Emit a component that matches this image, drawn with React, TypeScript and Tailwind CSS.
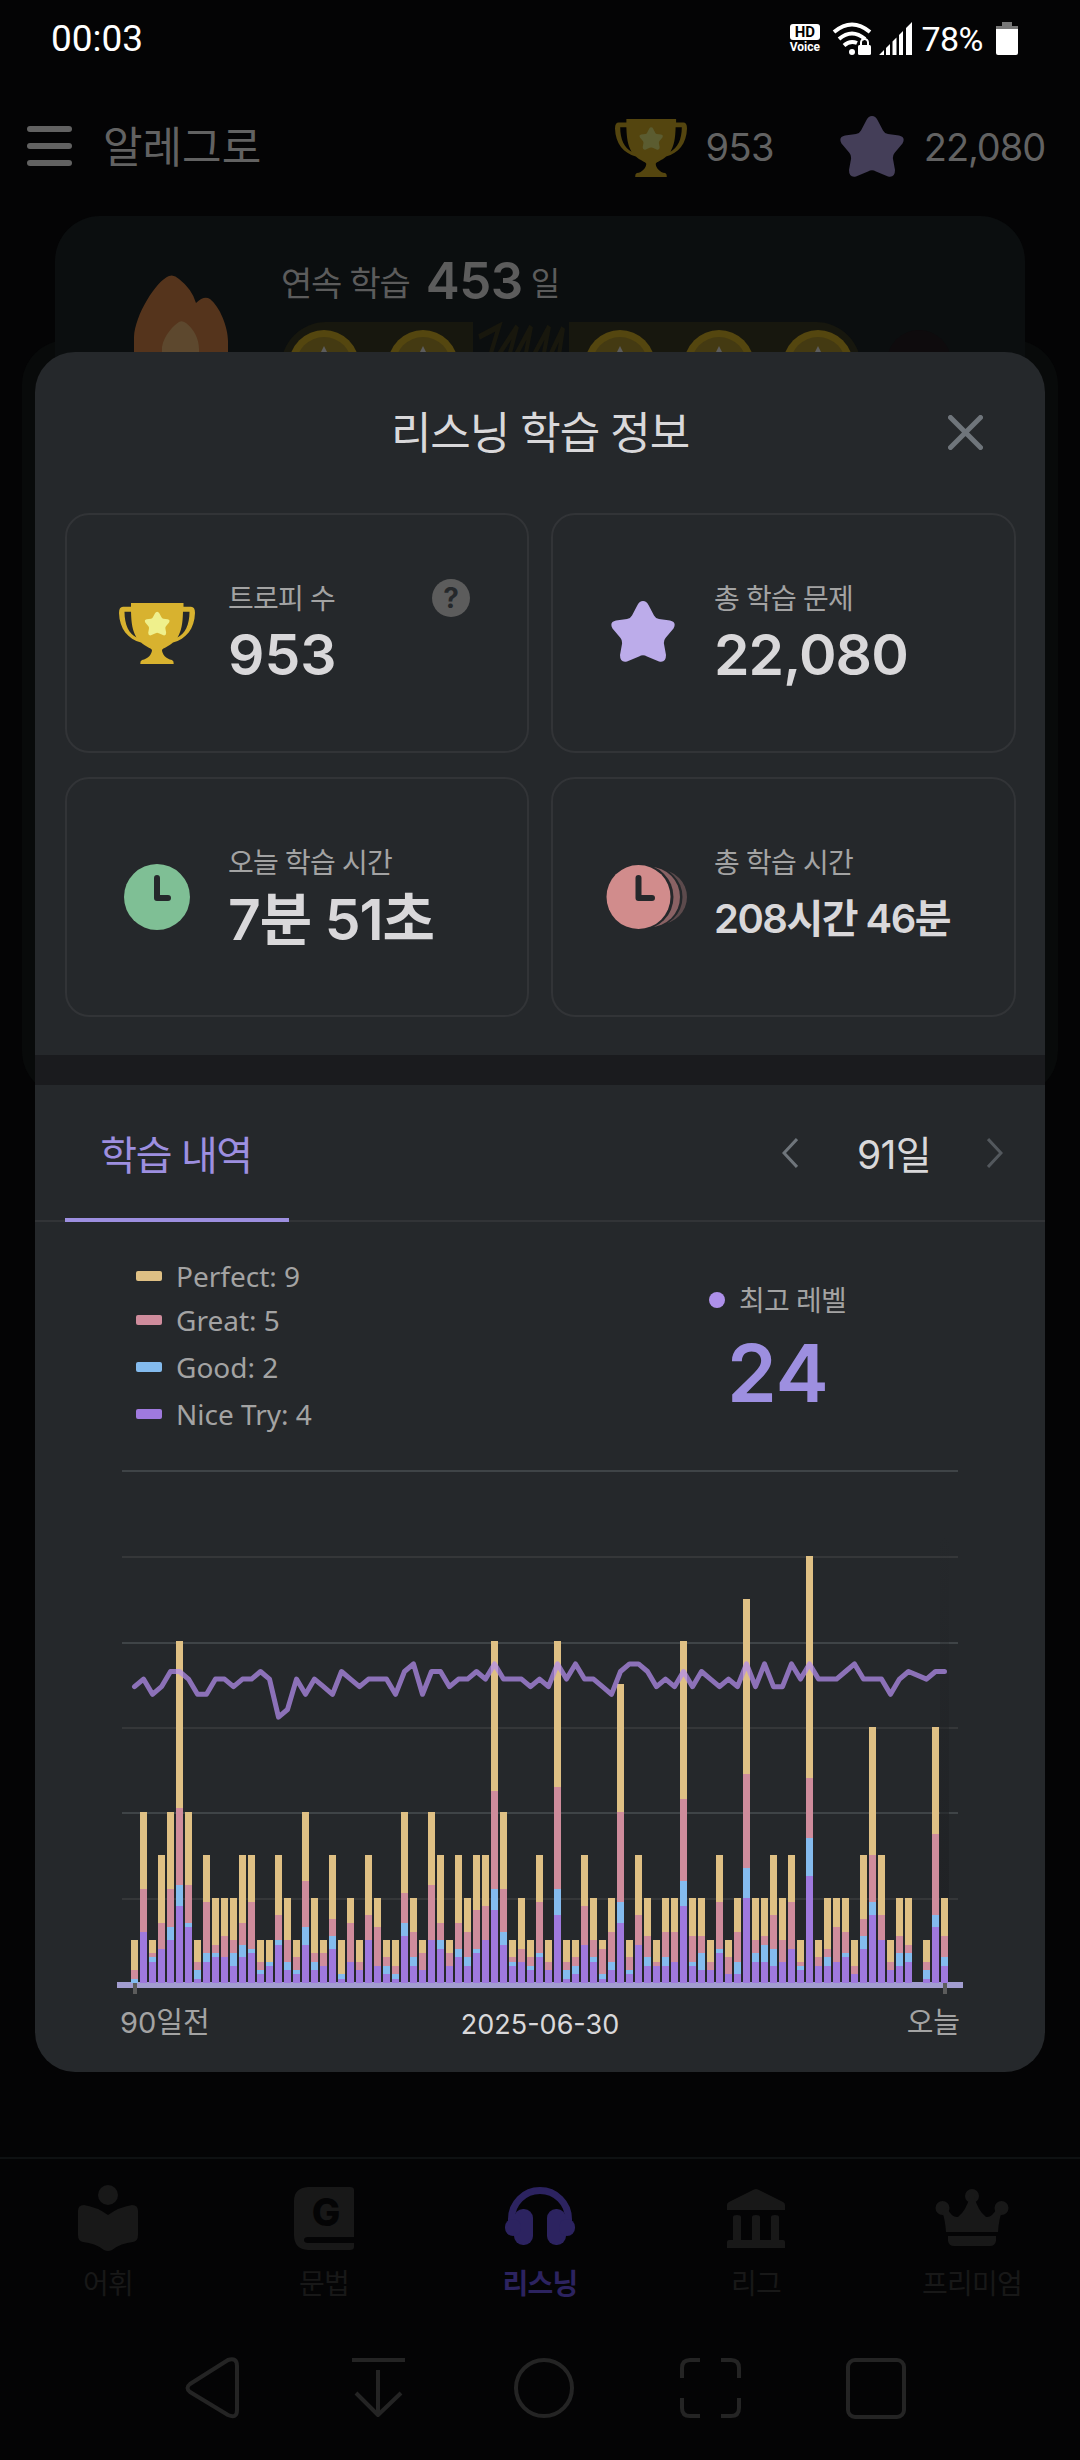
import type { ReactNode } from 'react';

// cumulative counts per day: [nice try, + good, + great, + perfect]
const days: number[][] = [
  [0, 1, 3, 10], [12, 12, 22, 40], [5, 6, 7, 10], [8, 8, 14, 30], [10, 13, 22, 40],
  [18, 23, 41, 80], [13, 14, 23, 40], [1, 3, 5, 10], [5, 7, 19, 30], [6, 7, 9, 20],
  [6, 6, 11, 20], [4, 7, 10, 20], [6, 9, 14, 30], [7, 8, 19, 30], [2, 3, 5, 10],
  [4, 5, 5, 10], [9, 10, 16, 30], [3, 5, 10, 20], [2, 3, 6, 10], [9, 13, 24, 40],
  [3, 5, 7, 20], [4, 4, 7, 10], [8, 11, 15, 30], [1, 2, 2, 10], [5, 5, 14, 20],
  [3, 3, 5, 10], [10, 10, 16, 30], [4, 4, 13, 20], [2, 4, 6, 10], [1, 2, 4, 10],
  [11, 14, 21, 40], [4, 6, 12, 20], [3, 3, 7, 10], [10, 10, 23, 40], [8, 10, 14, 30],
  [4, 4, 7, 10], [6, 8, 14, 30], [4, 6, 12, 20], [7, 8, 17, 30], [10, 10, 18, 30],
  [17, 22, 45, 80], [9, 12, 22, 40], [4, 5, 6, 10], [5, 5, 8, 20], [3, 4, 6, 10],
  [6, 7, 19, 30], [3, 3, 5, 10], [16, 22, 46, 80], [1, 3, 5, 10], [2, 4, 6, 10],
  [9, 9, 18, 30], [5, 6, 10, 20], [1, 2, 8, 10], [3, 5, 12, 20], [14, 19, 40, 70],
  [2, 3, 6, 10], [9, 9, 16, 30], [4, 6, 11, 20], [4, 4, 5, 10], [4, 6, 12, 20],
  [5, 5, 12, 20], [18, 24, 43, 80], [4, 5, 11, 20], [3, 7, 11, 20], [3, 3, 5, 10],
  [7, 8, 19, 30], [2, 2, 6, 10], [2, 5, 12, 20], [20, 27, 49, 90], [5, 7, 10, 20],
  [5, 9, 11, 20], [4, 8, 16, 30], [5, 5, 10, 20], [8, 8, 19, 30], [3, 4, 5, 10],
  [25, 34, 48, 100], [4, 4, 6, 10], [4, 6, 8, 20], [5, 5, 13, 20], [6, 7, 12, 20],
  [2, 2, 4, 10], [8, 11, 15, 30], [16, 19, 30, 60], [10, 10, 16, 30], [3, 3, 5, 10],
  [4, 7, 11, 20], [5, 7, 9, 20], [0, 0, 0, 0], [1, 3, 5, 10], [13, 16, 35, 60],
  [4, 6, 11, 20],
];

// 0 = no session that day, the line skips it
const levels = [
  22, 23, 21, 22, 24, 24, 23, 21, 21, 23, 23, 22, 23, 23, 24, 23, 18, 19, 23, 21,
  23, 22, 21, 24, 23, 22, 23, 23, 23, 21, 24, 25, 21, 24, 24, 22, 23, 23, 24, 23,
  25, 23, 23, 23, 22, 23, 22, 25, 23, 25, 23, 23, 22, 21, 24, 25, 25, 24, 22, 23,
  22, 24, 22, 24, 23, 22, 23, 22, 25, 22, 25, 22, 22, 25, 23, 25, 23, 23, 23, 24,
  25, 23, 23, 23, 21, 23, 24, 0, 23, 24, 24,
];

const barColors = ['#9f79de', '#84bbee', '#cf8c9c', '#dfc084'];

const legend = [
  { label: 'Perfect: 9', swatch: 'bg-[#dfc084]', row: 'h-[44px]' },
  { label: 'Great: 5', swatch: 'bg-[#cf8c9c]', row: 'h-[43px]' },
  { label: 'Good: 2', swatch: 'bg-[#84bbee]', row: 'h-[52px]' },
  { label: 'Nice Try: 4', swatch: 'bg-[#9f79de]', row: 'h-[42px]' },
];

const STAR_PATH =
  'M32 0Q35.5 0 37.5 4L43 14.5Q44.5 17.5 48 18L59 19.5Q66 21 62.5 27.5L54.5 37Q52.5 39.5 53 43L55 54Q55 62 48 60.5L36 55.500Q32 53 28 55.500L16 60.5Q9 62 9 54L11 43Q11.5 39.5 9.5 37L1.5 27.5Q-2 21 5 19.5L16 18Q19.5 17.5 21 14.5L26.5 4Q28.500 0 32 0Z';

function Star({ className, color }: { className: string; color: string }) {
  return (
    <svg viewBox="0 0 64 61" className={className}>
      <path d={STAR_PATH} fill={color} />
    </svg>
  );
}

function Trophy({ className, color, star }: { className: string; color: string; star: string }) {
  return (
    <svg viewBox="0 0 76 61" className={className}>
      <path
        fill={color}
        fillRule="evenodd"
        d="M4 3.700H12V0H64.500V3.700H72Q76 3.700 76 10C75.500 26 67 36 54 39.500C49 44 44 45 43 47C43 51 47 56 53 57Q55 58 54.700 61H21.300Q21 58 23 57C29 56 33 51 33 47C32 45 27 44 22 39.500C9 36 .5 26 0 10Q0 3.700 4 3.700ZM5.500 8.700H12C12.300 20 13.500 28 17.500 34.500C10 30.500 5.500 22 5.500 8.700ZM70.500 8.700H64C63.700 20 62.500 28 58.500 34.500C66 30.500 70.500 22 70.500 8.700Z"
      />
      <path transform="translate(25.7 8.7) scale(.39)" fill={star} d={STAR_PATH} />
    </svg>
  );
}

function StatusBar() {
  return (
    <div className="flex h-[76px] items-center pl-[51px] pr-[62px] pt-px font-['Roboto',sans-serif] text-white">
      <span className="text-[37px] leading-none">00:03</span>
      <div className="ml-auto flex items-center">
        <div className="flex w-[31px] flex-col items-center">
          <span className="flex h-[16px] w-[30px] items-center justify-center rounded-[3px] bg-white text-[15px] font-bold leading-none text-black">HD</span>
          <span className="mt-[1px] text-[12px] font-bold leading-none">Voice</span>
        </div>
        <svg viewBox="0 0 40 34" className="ml-[12px] h-[34px] w-[40px]">
          <g fill="none" stroke="#fff" strokeWidth="4">
            <path d="M2 10Q20 -5 38 10" />
            <path d="M7 17Q20 6 33 17" />
            <path d="M12 23.500Q18 18 25 21" />
          </g>
          <circle cx="20" cy="30" r="3" fill="#fff" />
          <rect x="26" y="23" width="13" height="10" rx="1.500" fill="#fff" />
          <path d="M29 24V20.500a3.500 3.500 0 0 1 7 0V24" fill="none" stroke="#fff" strokeWidth="2" />
        </svg>
        <svg viewBox="0 0 33 33" className="ml-[7px] h-[33px] w-[33px]" fill="#fff">
          <path d="M0 33L5 28V33ZM7 26L11 22V33H7ZM13.500 19.500L17.500 15.500V33H13.500ZM20 13L24 9V33H20ZM27 6L33 0V33H27Z" />
        </svg>
        <span className="ml-[9px] text-[34px] leading-none tracking-[-0.5px]">78%</span>
        <svg viewBox="0 0 22 33" className="ml-[13px] h-[33px] w-[22px]">
          <path d="M6 0H16V4H22V9H0V4H6Z" fill="#777" />
          <path d="M0 7H22V31Q22 33 20 33H2Q0 33 0 31Z" fill="#fff" />
        </svg>
      </div>
    </div>
  );
}

function TopBar() {
  return (
    <header className="flex h-[140px] items-center pl-[27px] pr-[35px] text-[#626262]">
      <div className="flex w-[45px] flex-col gap-[11px]">
        <span className="h-[6px] rounded-full bg-[#626262]" />
        <span className="h-[6px] rounded-full bg-[#626262]" />
        <span className="h-[6px] rounded-full bg-[#626262]" />
      </div>
      <h1 className="ml-[31px] pt-[3px] text-[43px] leading-none">알레그로</h1>
      <Trophy className="ml-auto mt-[3px] h-[58px] w-[72px]" color="#54450f" star="#5b5c30" />
      <span className="ml-[18px] pt-[1px] text-[38px] leading-none tracking-[-0.6px]">953</span>
      <Star className="ml-[66px] h-[61px] w-[64px]" color="#443e58" />
      <span className="ml-[20px] pt-[1px] text-[38px] leading-none tracking-[-1.1px]">22,080</span>
    </header>
  );
}

function Coin() {
  return (
    <svg viewBox="0 0 70 70" className="h-[70px] w-[70px] shrink-0">
      <circle cx="35" cy="35" r="35" fill="#54460f" />
      <circle cx="35" cy="35" r="28" fill="#443a12" />
      <path d="M35 16L42 30H28Z" fill="#5c5c5c" />
    </svg>
  );
}

function StreakCard() {
  return (
    <section className="relative mx-[55px] flex h-[240px] rounded-t-[45px] bg-[#0b0e0f] pl-[79px]">
      <svg viewBox="0 0 94 110" className="mt-[59px] h-[110px] w-[94px] shrink-0">
        <path d="M0 110V62C1 40 22 6 35 1Q40 -1 45 4Q58 14 62 28Q70 20 76 24C86 32 94 52 94 66V110Z" fill="#55341c" />
        <path d="M28 110V72C30 60 40 50 45 47Q48 45 52 48C60 54 65 64 65 74V110Z" fill="#5d482e" />
      </svg>
      <div className="ml-[53px] flex flex-col pt-[35px] text-[#5c5c5c]">
        <div className="flex h-[71px] items-start pt-[12px]">
          <span className="pt-[3px] text-[34px] leading-[36px] tracking-[-1.2px]">연속 학습</span>
          <span className="ml-[16px] text-[51px] font-semibold leading-[36px] tracking-[-0.5px]">453</span>
          <span className="ml-[8px] pt-[3px] text-[32px] leading-[36px]">일</span>
        </div>
        <div className="flex items-start">
          <div className="flex h-[90px] w-[580px] rounded-[45px] bg-[#17170e]">
            <div className="flex w-[192px] gap-[29px] pl-[8px] pt-[8px]">
              <Coin />
              <Coin />
            </div>
            <svg viewBox="0 0 96 60" className="h-[90px] w-[96px] bg-[#0b0e0f]" preserveAspectRatio="none">
              <path d="M6 10L26 3L10 38L44 3L30 38L58 3L48 38L76 3L66 38L90 4L86 22" fill="none" stroke="#18170d" strokeWidth="4" />
            </svg>
            <div className="flex gap-[29px] pl-[16px] pt-[8px]">
              <Coin />
              <Coin />
              <Coin />
            </div>
          </div>
          <div className="ml-[26px] mt-[8px] h-[64px] w-[64px] rounded-full bg-[#0e0b0d]" />
        </div>
      </div>
    </section>
  );
}

function StatCard({ icon, label, help, children }: { icon: ReactNode; label: string; help?: boolean; children: ReactNode }) {
  return (
    <div className="flex h-[240px] items-center rounded-[24px] border-2 border-[#323437] pl-[52px] pr-[57px]">
      <div className="flex w-[80px] shrink-0 items-center">{icon}</div>
      <div className="ml-[29px] flex-1 pt-[2px]">
        <div className="flex h-[40px] items-center justify-between">
          <span className="whitespace-nowrap pt-px text-[28px] leading-none tracking-[-0.8px] text-[#a3a3a3]">{label}</span>
          {help && (
            <span className="flex h-[38px] w-[38px] items-center justify-center rounded-full bg-[#5c5c5c] text-[28px] font-bold leading-none text-[#25282b]">?</span>
          )}
        </div>
        <div className="flex h-[72px] items-center whitespace-nowrap font-semibold text-[#d9d8da]">{children}</div>
      </div>
    </div>
  );
}

function StudyChart() {
  const x = (i: number) => 14 + 9 * i;
  const base = 521;
  const unit = 4.27;
  const points = levels
    .map((level, i) => (level ? `${x(i) + 3.5},${209.5 + (24 - level) * 7.6}` : ''))
    .filter(Boolean)
    .join(' ');

  return (
    <svg viewBox="0 0 846 534" className="mt-[-3px] h-[534px] w-[846px]">
      <defs>
        <linearGradient id="todayBand" x1="0" y1="0" x2="0" y2="1">
          <stop offset="0" stopColor="#1f2124" stopOpacity="0" />
          <stop offset="1" stopColor="#1f2124" />
        </linearGradient>
      </defs>
      {[8, 94, 180, 265, 350, 436].map((y, i) => (
        <rect key={y} x="5" y={y} width="836" height="2" fill={i % 2 ? '#353739' : '#3f4447'} />
      ))}
      <rect x="823" y="70" width="9" height="450" fill="url(#todayBand)" />
      <rect x="0" y="520" width="846" height="6" fill="#a29dd0" />
      {days.map((day, i) =>
        day.map((top, k) => {
          const from = k ? day[k - 1] : 0;
          const y = Math.round(base - top * unit);
          return (
            <rect key={`${i}-${k}`} x={x(i)} y={y} width="7" height={Math.round(base - from * unit) - y} fill={barColors[k]} />
          );
        })
      )}
      <polyline points={points} fill="none" stroke="#b28ded" strokeOpacity=".73" strokeWidth="5" strokeLinecap="round" strokeLinejoin="round" />
      <rect x="16" y="521" width="4" height="11" fill="#5c5c5c" />
      <rect x="826" y="521" width="4" height="11" fill="#5c5c5c" />
    </svg>
  );
}

function InfoModal() {
  return (
    <div className="absolute left-[35px] top-[352px] flex h-[1720px] w-[1010px] flex-col overflow-hidden rounded-[40px] bg-[#25282b]">
      <div className="flex h-[161px] shrink-0 items-center justify-between pl-[97px] pr-[62px]">
        <span />
        <h2 className="text-[44px] leading-none tracking-[-1.1px] text-[#d9d8da]">리스닝 학습 정보</h2>
        <svg viewBox="0 0 35 35" className="h-[35px] w-[35px]" stroke="#6f757b" strokeWidth="5" strokeLinecap="round">
          <path d="M2.500 2.500L32.500 32.500M32.500 2.500L2.500 32.500" />
        </svg>
      </div>

      <div className="grid shrink-0 grid-cols-[464px_465px] gap-x-[22px] gap-y-6 px-[30px]">
        <StatCard label="트로피 수" help icon={<Trophy className="h-[61px] w-[76px]" color="#d8b22f" star="#eff08c" />}>
          <span className="text-[57px] leading-none">953</span>
        </StatCard>
        <StatCard label="총 학습 문제" icon={<Star className="ml-[6px] mt-[-3px] h-[61px] w-[64px]" color="#bcacea" />}>
          <span className="text-[57px] leading-none tracking-[-0.9px]">22,080</span>
        </StatCard>
        <StatCard
          label="오늘 학습 시간"
          icon={
            <svg viewBox="0 0 66 66" className="ml-[5px] h-[66px] w-[66px]">
              <circle cx="33" cy="33" r="33" fill="#7fbf95" />
              <path d="M33 14V34H44" fill="none" stroke="#25282b" strokeWidth="6" strokeLinecap="round" strokeLinejoin="round" />
            </svg>
          }
        >
          <span className="pt-[3px] text-[57px] leading-none tracking-[-1px]">7분 51초</span>
        </StatCard>
        <StatCard
          label="총 학습 시간"
          icon={
            <svg viewBox="0 0 82 64" className="ml-[1px] h-[64px] w-[82px] shrink-0">
              <circle cx="54" cy="32" r="27" fill="#5c4a4c" />
              <circle cx="46" cy="32" r="30.500" fill="#25282b" />
              <circle cx="44" cy="32" r="30" fill="#8a6264" />
              <circle cx="34.500" cy="32" r="33" fill="#25282b" />
              <circle cx="32.500" cy="32" r="32" fill="#d18c8c" />
              <path d="M32.500 13V33H46" fill="none" stroke="#25282b" strokeWidth="6" strokeLinecap="round" strokeLinejoin="round" />
            </svg>
          }
        >
          <span className="pt-px text-[40px] leading-none tracking-[-1.5px]">208시간 46분</span>
        </StatCard>
      </div>

      <div className="mt-[38px] h-[30px] shrink-0 bg-[#1a1b1e]" />

      <div className="flex h-[137px] shrink-0 items-stretch border-b-2 border-[#323437] pl-[30px]">
        <div className="-mb-[2px] flex w-[224px] items-center justify-center border-b-4 border-[#9d8fe0] pr-[2px] pt-[8px] text-[40px] leading-none tracking-[-1.4px] text-[#9d8fe0]">
          학습 내역
        </div>
        <div className="ml-auto flex items-center pr-[42px] text-[#d9d8da]">
          <svg viewBox="0 0 16 30" className="h-[30px] w-[16px]" fill="none" stroke="#6f757b" strokeWidth="3">
            <path d="M15 1L2 15L15 29" />
          </svg>
          <span className="w-[189px] pl-[3px] pt-[3px] text-center text-[39px] leading-none tracking-[-0.7px]">91일</span>
          <svg viewBox="0 0 16 30" className="h-[30px] w-[16px]" fill="none" stroke="#53585d" strokeWidth="3">
            <path d="M1 1L14 15L1 29" />
          </svg>
        </div>
      </div>

      <div className="flex h-[243px] shrink-0 pl-[101px] pt-[32px] text-[#a3a3a3]">
        <div className="w-[573px] font-['Noto_Sans',sans-serif] text-[28px] leading-none">
          {legend.map((item) => (
            <div key={item.label} className={`flex items-center ${item.row}`}>
              <span className={`mr-[14px] h-[10px] w-[26px] rounded-[2px] ${item.swatch}`} />
              {item.label}
            </div>
          ))}
        </div>
        <div className="pt-[26px]">
          <div className="flex h-[40px] items-center">
            <span className="mr-[14px] h-[16px] w-[16px] rounded-full bg-[#ae90ea]" />
            <span className="pt-[2px] text-[28px] leading-none tracking-[-0.8px]">최고 레벨</span>
          </div>
          <div className="ml-[18px] mt-[13px] text-[80px] font-semibold leading-none text-[#9d8fe0]">24</div>
        </div>
      </div>

      <div className="flex flex-col items-center">
        <StudyChart />
        <div className="grid h-[52px] w-[840px] grid-cols-3 items-center text-[29px] leading-none text-[#a3a3a3]">
          <span>90일전</span>
          <span className="pt-1 text-center text-[27px] text-[#d9d8da]">2025-06-30</span>
          <span className="text-right">오늘</span>
        </div>
      </div>
    </div>
  );
}

function TabItem({ label, active, children }: { label: string; active?: boolean; children: ReactNode }) {
  return (
    <div className={`flex w-[216px] flex-col items-center ${active ? 'font-bold text-[#2c2360]' : 'text-[#181818]'}`}>
      <svg viewBox="0 0 76 68" className="h-[68px] w-[76px]" fill="currentColor">{children}</svg>
      <span className="mt-[17px] text-[28px] leading-none tracking-[-0.8px]">{label}</span>
    </div>
  );
}

function BottomNav() {
  return (
    <nav className="flex h-[163px] border-t-2 border-[#0e1112] pt-[26px]">
      <TabItem label="어휘">
        <circle cx="38" cy="10" r="10" />
        <path d="M38 30Q27 22 14 20Q8 20 8 26V50Q8 56 13 57Q25 58 34 65Q38 67 42 65Q51 58 63 57Q68 56 68 50V26Q68 20 62 20Q49 22 38 30Z" />
      </TabItem>
      <TabItem label="문법">
        <path d="M22 2H64Q68 2 68 5V52H22Q18 52 18 55T22 58H68V62Q68 65 64 65H22Q8 64 8 50V16Q8 3 22 2Z" />
        <text x="40" y="41" textAnchor="middle" fill="#040405" fontFamily="Inter" fontSize="38" fontWeight="800">G</text>
      </TabItem>
      <TabItem label="리스닝" active>
        <path d="M9.500 42V34a28.500 28.500 0 0 1 57 0V42" fill="none" stroke="currentColor" strokeWidth="7" />
        <rect x="12" y="24" width="19" height="36" rx="9" />
        <rect x="45" y="24" width="19" height="36" rx="9" />
        <rect x="3" y="34" width="16" height="17" rx="8" />
        <rect x="57" y="34" width="16" height="17" rx="8" />
      </TabItem>
      <TabItem label="리그">
        <path d="M38 4Q39 4 41 5L65 17Q67 18 67 20V25H9V20Q9 18 11 17L35 5Q37 4 38 4ZM15 32Q15 30 19 30T23 32V55H34V32Q34 30 38 30T42 32V55H53V32Q53 30 57 30T61 32V55H65Q67 55 67 57V63H9V57Q9 55 11 55H15Z" />
      </TabItem>
      <TabItem label="프리미엄">
        <circle cx="38" cy="11" r="7" />
        <circle cx="8.500" cy="23" r="7" />
        <circle cx="67.500" cy="23" r="7" />
        <path d="M36 11H40Q44 26 52 32Q58 33 63 23L68 27Q65 33 64 47H12Q11 33 8 27L13 23Q18 33 24 32Q32 26 36 11ZM14 51H62V56Q61 61 56 61H20Q15 61 14 56Z" />
      </TabItem>
    </nav>
  );
}

function SystemNav() {
  return (
    <div className="flex h-[140px] items-start pl-[184px] pt-[37px]">
      <svg viewBox="0 0 722 62" className="h-[62px] w-[722px]" fill="none" stroke="#242424" strokeWidth="4">
        <path d="M44 3Q53 0 53 9V53Q53 62 44 58L6 35Q1 31 6 27Z" strokeLinejoin="round" />
        <path d="M168 3H221M194 13V58M172 36L194 58L217 36" strokeLinejoin="round" />
        <circle cx="360" cy="31" r="28" />
        <path d="M516 3H506Q498 3 498 11V21M537 3H547Q555 3 555 11V21M516 59H506Q498 59 498 51V41M537 59H547Q555 59 555 51V41" />
        <rect x="664" y="3" width="56" height="57" rx="7" />
      </svg>
    </div>
  );
}

export default function App() {
  return (
    <div className="relative flex h-[2460px] w-[1080px] flex-col overflow-hidden bg-[#040405] font-['Inter','Noto_Sans_CJK_KR',sans-serif]">
      <StatusBar />
      <TopBar />
      <StreakCard />
      <div className="mx-[22px] mt-[-116px] h-[756px] rounded-[45px] bg-[#080a0a]" />
      <div className="mt-auto">
        <BottomNav />
        <SystemNav />
      </div>
      <InfoModal />
    </div>
  );
}
